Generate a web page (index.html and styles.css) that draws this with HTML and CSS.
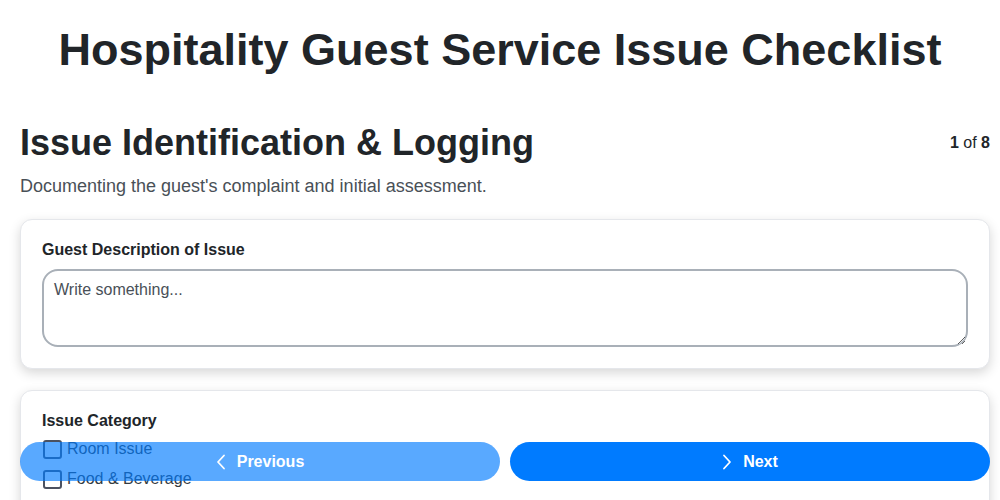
FILE: index.html
```html
<!DOCTYPE html>
<html lang="en">
<head>
  <meta charset="UTF-8">
  <meta name="viewport" content="width=device-width, initial-scale=1.0">
  <title>Hospitality Guest Service Issue Checklist</title>
  <link rel="stylesheet" href="styles.css">
</head>
<body>

<h1 class="page-title">Hospitality Guest Service Issue Checklist</h1>

<div class="step">
  <div class="step-header">
    <h2 class="step-title">Issue Identification &amp; Logging</h2>
    <div class="step-count"><b>1</b> of <b>8</b></div>
  </div>
  <p class="step-desc">Documenting the guest's complaint and initial assessment.</p>

  <div class="card">
    <label class="field-label" for="desc">Guest Description of Issue</label>
    <textarea id="desc" class="field-text" placeholder="Write something..."></textarea>
  </div>

  <div class="card">
    <div class="field-label">Issue Category</div>
    <label class="check"><input type="checkbox"> Room Issue</label>
    <label class="check"><input type="checkbox"> Food &amp; Beverage</label>
    <label class="check"><input type="checkbox"> Staff Behavior</label>
    <label class="check"><input type="checkbox"> Billing</label>
    <label class="check"><input type="checkbox"> Other</label>
  </div>
</div>

<div class="nav">
  <button class="nav-btn prev" disabled>
    <svg width="10" height="16" viewBox="0 0 10 16"><path d="M8 1.5 L2 8 L8 14.5" fill="none" stroke="currentColor" stroke-width="1.8" stroke-linecap="round" stroke-linejoin="round"/></svg>
    Previous
  </button>
  <button class="nav-btn next">
    <svg width="10" height="16" viewBox="0 0 10 16"><path d="M2 1.5 L8 8 L2 14.5" fill="none" stroke="currentColor" stroke-width="1.8" stroke-linecap="round" stroke-linejoin="round"/></svg>
    Next
  </button>
</div>

</body>
</html>
```

FILE: styles.css
```css
body {
  margin: 0;
  font-family: "Liberation Sans", Arial, sans-serif;
  color: #212529;
  background-color: #fff;
}
.page-title {
  margin: 24px 0 0;
  font-size: 45px;
  text-align: center;
}
.step {
  padding: 0 10px 100px 20px;
}
.step-header {
  display: flex;
  justify-content: space-between;
  align-items: center;
  margin-top: 46px;
}
.step-title {
  margin: 0;
  font-size: 36px;
}
.step-count {
  font-size: 16px;
}
.step-desc {
  margin: 12px 0 22px;
  font-size: 18px;
  color: #495057;
}
.card {
  border: 1px solid #e5e7eb;
  border-radius: 12px;
  box-shadow: 0 4px 12px rgba(0, 0, 0, 0.16);
  padding: 21px 21px;
  margin-bottom: 21px;
  background-color: #fff;
}
.field-label {
  display: block;
  font-size: 16px;
  font-weight: bold;
  margin-bottom: 10px;
}
.field-text {
  display: block;
  box-sizing: border-box;
  width: 100%;
  height: 78px;
  padding: 10px;
  border: 2px solid #a9b0b8;
  border-radius: 16px;
  font-family: inherit;
  font-size: 16px;
  color: #212529;
}
.field-text::placeholder {
  color: #495057;
}
.check {
  display: flex;
  align-items: center;
  gap: 5px;
  height: 30px;
  font-size: 16px;
  color: #343a40;
}
.field-label + .check {
  margin-top: -6px;
}
.check input {
  appearance: none;
  -webkit-appearance: none;
  margin: 0 0 0 1px;
  width: 19px;
  height: 19px;
  border: 2px solid #4b5160;
  border-radius: 3px;
}
.nav {
  position: fixed;
  left: 20px;
  right: 10px;
  bottom: 19px;
  display: flex;
  gap: 10px;
}
.nav-btn {
  flex: 1;
  display: flex;
  align-items: center;
  justify-content: center;
  gap: 11px;
  height: 39px;
  border: none;
  border-radius: 20px;
  background-color: #007bff;
  color: #fff;
  font-family: inherit;
  font-size: 16px;
  font-weight: bold;
  cursor: pointer;
}
.nav-btn.prev {
  opacity: 0.65;
}
```
